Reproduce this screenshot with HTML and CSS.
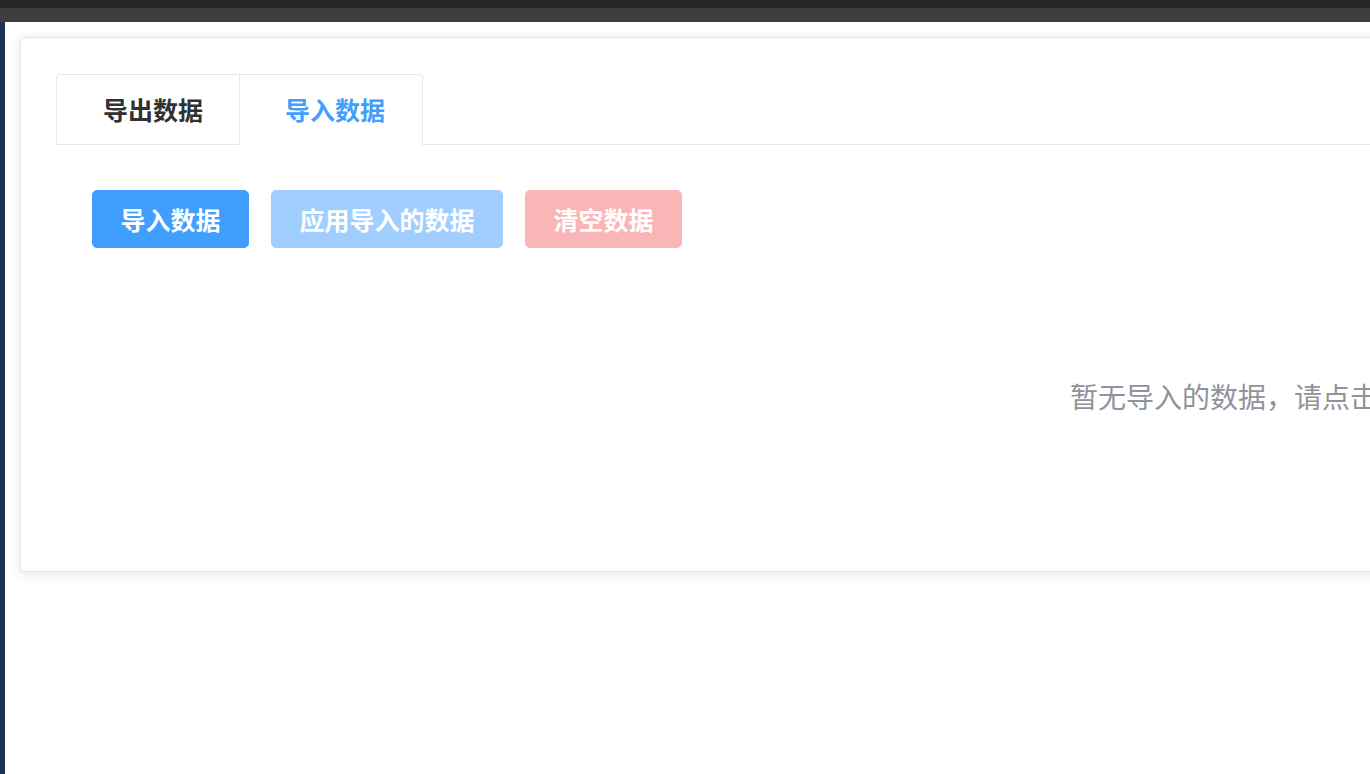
FILE: index.html
```html
<!DOCTYPE html>
<html lang="zh-CN">
<head>
    <meta charset="UTF-8">
    <meta name="viewport" content="width=device-width, initial-scale=1.0">
    <title>数据管理</title>
    <link rel="stylesheet" href="styles.css">
</head>
<body>
    <div class="topbar">
        <div class="topbar-top"></div>
        <div class="topbar-bottom"></div>
    </div>

    <div class="layout">
        <div class="side-strip"></div>

        <div class="main">
            <div class="card">
                <div class="tabs-header">
                    <div class="tabs-nav">
                        <div class="tab">导出数据</div>
                        <div class="tab active">导入数据</div>
                    </div>
                </div>

                <!-- 导入数据 -->
                <div class="tab-pane">
                    <div class="actions">
                        <button class="btn btn-primary">导入数据</button>
                        <button class="btn btn-primary is-disabled">应用导入的数据</button>
                        <button class="btn btn-danger is-disabled">清空数据</button>
                    </div>

                    <div class="empty">暂无导入的数据，请点击上方按钮导入数据</div>
                </div>
            </div>
        </div>
    </div>
</body>
</html>
```

FILE: styles.css
```css
html, body {
    margin: 0;
    height: 100%;
    overflow: hidden;
}

body {
    font-family: "Noto Sans CJK SC", "Noto Sans", sans-serif;
    background-color: #fff;
    color: #303133;
}

.topbar-top {
    height: 8px;
    background-color: #272727;
}

.topbar-bottom {
    height: 14px;
    background-color: #3d3d3d;
}

.layout {
    display: flex;
    height: calc(100% - 22px);
}

.side-strip {
    width: 5px;
    flex-shrink: 0;
    background-color: #1f3154;
}

.main {
    flex: 1;
    padding: 15px 0 0 15px;
}

.card {
    width: 2632px;
    box-sizing: border-box;
    padding: 36px 35px 35px;
    background-color: #fff;
    border: 1px solid #e4e7ed;
    border-radius: 4px;
    box-shadow: 0 2px 12px 0 rgba(0, 0, 0, 0.1);
}

.tabs-header {
    border-bottom: 1px solid #e4e7ed;
}

.tabs-nav {
    display: inline-flex;
    border: 1px solid #e4e7ed;
    border-bottom: none;
    border-radius: 4px 4px 0 0;
    margin-bottom: -1px;
    vertical-align: top;
}

.tab {
    height: 69px;
    line-height: 69px;
    padding: 0 36px 0 46px;
    font-size: 25px;
    font-weight: bold;
    color: #303133;
    border-bottom: 1px solid transparent;
}

.tab + .tab {
    border-left: 1px solid #e4e7ed;
    padding: 0 37px 0 45px;
}

.tab.active {
    color: #409eff;
    border-bottom-color: #fff;
}

.tab-pane {
    padding-left: 36px;
}

.actions {
    display: flex;
    gap: 22px;
    margin-top: 45px;
}

.btn {
    height: 58px;
    padding: 0 27.5px;
    border: 1px solid;
    border-radius: 5px;
    font-family: inherit;
    font-size: 25px;
    font-weight: bold;
    color: #fff;
    cursor: pointer;
}

.btn-primary {
    background-color: #409eff;
    border-color: #409eff;
}

.btn-primary.is-disabled {
    background-color: #a0cfff;
    border-color: #a0cfff;
    cursor: not-allowed;
}

.btn-danger.is-disabled {
    background-color: #fab6b6;
    border-color: #fab6b6;
    cursor: not-allowed;
}

.empty {
    margin-left: -36px;
    padding: 130px 0 122px;
    line-height: 36px;
    font-size: 28px;
    color: #909399;
    text-align: center;
}
```
